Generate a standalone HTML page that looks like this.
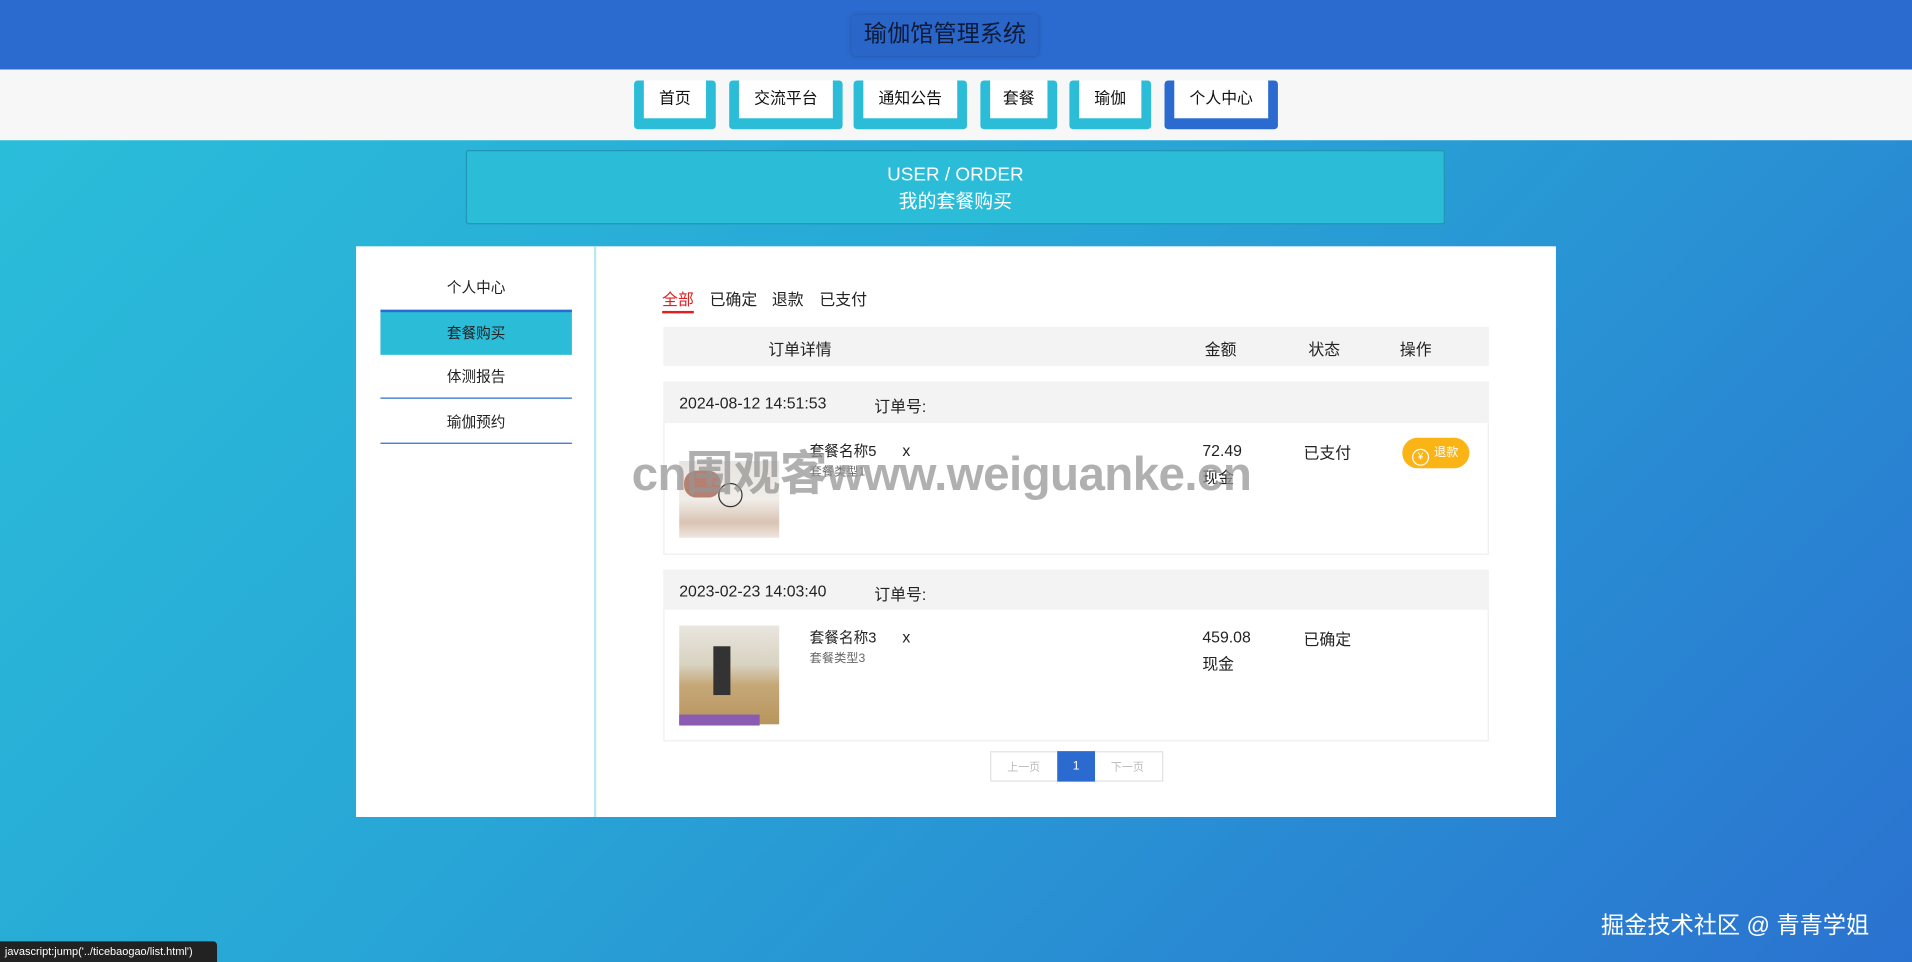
<!DOCTYPE html>
<html><head><meta charset="utf-8"><style>
html,body{margin:0;padding:0;width:1912px;height:962px;overflow:hidden}
body{font-family:"Liberation Sans","Noto Sans CJK SC",sans-serif;background:linear-gradient(135deg,#2ac0da 0%,#28a6d6 45%,#2a72d0 100%)}
#w{position:absolute;left:0;top:0;width:1568px;height:789px;transform:scale(1.21939);transform-origin:0 0}
.a{position:absolute}
.hdr{left:0;top:0;width:1568px;height:57px;background:#2b6bd0;box-shadow:0 2px 4px rgba(0,0,0,.25)}
.title{left:698px;top:12px;width:154px;height:34px;background:#2a66c8;border-radius:4px;box-shadow:0 0 4px rgba(0,0,0,.2);color:#0e1a38;font-size:19px;line-height:34px;text-align:center}
.nav{left:0;top:57px;width:1568px;height:58px;background:#f7f7f7}
.btn{position:absolute;top:66px;height:40px;background:#2bbcd8;border-radius:3px}
.btn div{position:absolute;left:8px;right:8px;top:0;bottom:9px;background:#fff;font-size:13px;text-align:center;line-height:30px;color:#111}
.ban{left:382px;top:123px;width:803px;height:61px;background:#2bbcd8;border:1px solid #2095b5;border-radius:2px;color:#fff;text-align:center;font-size:15.5px;line-height:22px;padding-top:9px;box-sizing:border-box}
.panel{left:292px;top:202px;width:984px;height:468px;background:#fff}
.side{left:487px;top:202px;width:2px;height:468px;background:#b9e8f2}
.mi{position:absolute;left:312px;width:157px;height:36px;line-height:36px;text-align:center;font-size:12px;color:#222;box-sizing:border-box}
.t{position:absolute;font-size:13px;color:#222;white-space:nowrap}
.gray{background:#f3f3f3}
</style></head><body><div id="w">
<div class="a hdr"></div>
<div class="a title">瑜伽馆管理系统</div>
<div class="a nav"></div>
<div class="btn" style="left:520px;width:67px"><div>首页</div></div>
<div class="btn" style="left:598px;width:93px"><div>交流平台</div></div>
<div class="btn" style="left:700px;width:93px"><div>通知公告</div></div>
<div class="btn" style="left:804px;width:63px"><div>套餐</div></div>
<div class="btn" style="left:877px;width:67px"><div>瑜伽</div></div>
<div class="btn" style="left:955px;width:93px;background:#2b6bd0"><div>个人中心</div></div>
<div class="a ban">USER / ORDER<br>我的套餐购买</div>
<div class="a panel"></div>
<div class="a side"></div>
<div class="mi" style="top:218px">个人中心</div>
<div class="mi" style="top:254px;background:#2bbcd8;border-top:2px solid #2b6bd0;line-height:34px;height:37px">套餐购买</div>
<div class="mi" style="top:291px;border-bottom:1px solid #2b6bd0">体测报告</div>
<div class="mi" style="top:328px;border-bottom:1px solid #2b6bd0">瑜伽预约</div>
<div class="t" style="left:543px;top:235px;color:#e02020;border-bottom:2px solid #e02020;padding-bottom:1px">全部</div>
<div class="t" style="left:582px;top:235px">已确定</div>
<div class="t" style="left:633px;top:235px">退款</div>
<div class="t" style="left:672px;top:235px">已支付</div>
<div class="a gray" style="left:544px;top:268px;width:677px;height:32px"></div>
<div class="t" style="left:630px;top:276px">订单详情</div>
<div class="t" style="left:988px;top:276px">金额</div>
<div class="t" style="left:1073px;top:276px">状态</div>
<div class="t" style="left:1148px;top:276px">操作</div>

<div class="a" style="left:544px;top:313px;width:675px;height:140px;border:1px solid #eee"></div>
<div class="a gray" style="left:544px;top:313px;width:677px;height:34px"></div>
<div class="t" style="left:557px;top:323px">2024-08-12 14:51:53</div>
<div class="t" style="left:717px;top:323px">订单号:</div>
<div class="a" style="left:557px;top:378px;width:82px;height:63px;background:linear-gradient(180deg,#e8e4e0 0%,#f1ede8 50%,#d9c4b4 80%,#efe6df 100%)"></div>
<div class="a" style="left:561px;top:386px;width:30px;height:22px;background:#b58070;border-radius:10px"></div>
<div class="a" style="left:589px;top:396px;width:18px;height:18px;border:1.5px solid #333;border-radius:50%"></div>
<div class="t" style="left:664px;top:361px;font-size:12px">套餐名称5</div>
<div class="t" style="left:664px;top:378px;font-size:10px;color:#666">套餐类型1</div>
<div class="t" style="left:740px;top:362px">x</div>
<div class="t" style="left:986px;top:362px">72.49</div>
<div class="t" style="left:986px;top:381px">现金</div>
<div class="t" style="left:1069px;top:361px">已支付</div>
<div class="a" style="left:1150px;top:359px;width:55px;height:25px;background:#fbb416;border-radius:13px;color:#fff;font-size:10px;line-height:25px"><span style="display:inline-block;width:12px;height:12px;border:1px solid #fff;border-radius:50%;font-size:8px;line-height:12px;text-align:center;margin:0 4px 0 8px;vertical-align:-3px">¥</span>退款</div>

<div class="a" style="left:544px;top:467px;width:675px;height:139px;border:1px solid #eee"></div>
<div class="a gray" style="left:544px;top:467px;width:677px;height:33px"></div>
<div class="t" style="left:557px;top:477px">2023-02-23 14:03:40</div>
<div class="t" style="left:717px;top:477px">订单号:</div>
<div class="a" style="left:557px;top:513px;width:82px;height:81px;background:linear-gradient(180deg,#e9e6df 0%,#d8d2c0 40%,#c6a878 60%,#b8955e 100%)"></div>
<div class="a" style="left:557px;top:586px;width:66px;height:9px;background:#8a5bb0"></div>
<div class="a" style="left:585px;top:530px;width:14px;height:40px;background:#333"></div>
<div class="t" style="left:664px;top:514px;font-size:12px">套餐名称3</div>
<div class="t" style="left:664px;top:531px;font-size:10px;color:#666">套餐类型3</div>
<div class="t" style="left:740px;top:515px">x</div>
<div class="t" style="left:986px;top:515px">459.08</div>
<div class="t" style="left:986px;top:534px">现金</div>
<div class="t" style="left:1069px;top:514px">已确定</div>

<div class="a" style="left:812px;top:616px;width:140px;height:23px;border:1px solid #e2e2e2"></div>
<div class="t" style="left:826px;top:622px;font-size:9px;color:#bbb">上一页</div>
<div class="a" style="left:867px;top:616px;width:31px;height:25px;background:#2b6bd0;color:#fff;font-size:10px;text-align:center;line-height:25px">1</div>
<div class="t" style="left:911px;top:622px;font-size:9px;color:#bbb">下一页</div>

<div class="t" style="left:518px;top:358px;font-size:39px;font-weight:bold;color:rgba(150,150,150,.75);letter-spacing:-0.5px">cn围观客www.weiguanke.cn</div>
<div class="t" style="left:1313px;top:744px;font-size:19px;color:#fff">掘金技术社区 @ 青青学姐</div>
<div class="a" style="left:0;top:772px;width:178px;height:17px;background:#222;color:#fff;font-size:9px;line-height:17px;padding-left:4px;box-sizing:border-box;border-radius:0 3px 0 0">javascript:jump('../ticebaogao/list.html')</div>
</div></body></html>
